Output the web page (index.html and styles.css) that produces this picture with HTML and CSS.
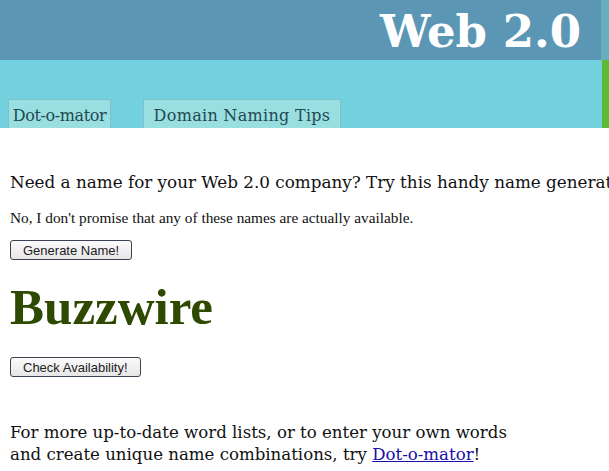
FILE: index.html
```html
<!DOCTYPE html>
<html lang="en">
<head>
    <meta charset="UTF-8">
    <title>Web 2.0 Name Generator</title>
    <link rel="stylesheet" href="styles.css">
</head>
<body>

    <div class="top">
        <div class="top-main">
            <div class="header">
                <h1>Web 2.0</h1>
            </div>
            <div class="nav">
                <a class="tab tab-dot" href="#">Dot-o-mator</a>
                <a class="tab tab-tips" href="#">Domain Naming Tips</a>
            </div>
        </div>
        <div class="side">
            <div class="side-head"></div>
            <div class="side-nav"></div>
        </div>
    </div>

    <div class="content">
        <p class="intro">Need a name for your Web 2.0 company? Try this handy name generator!</p>
        <p class="note">No, I don't promise that any of these names are actually available.</p>
        <button class="btn">Generate Name!</button>
        <div class="name" id="name">Buzzwire</div>
        <button class="btn">Check Availability!</button>
        <p class="more">For more up-to-date word lists, or to enter your own words<br>
            and create unique name combinations, try <a href="#">Dot-o-mator</a>!</p>
    </div>

</body>
</html>
```

FILE: styles.css
```css
body {
    margin: 0;
    font-family: "DejaVu Serif", Georgia, serif;
    background: white;
    overflow: hidden;
}

.top {
    display: flex;
}

.top-main {
    flex: 1;
}

.header {
    background: #5b97b5;
    height: 60px;
    text-align: right;
}

.header h1 {
    margin: 0;
    padding-right: 20px;
    color: white;
    font-size: 45px;
    line-height: 64px;
    font-weight: bold;
}

.nav {
    background: #72d0df;
    height: 68px;
    display: flex;
    align-items: flex-end;
    gap: 32px;
    padding-left: 8px;
}

.tab {
    background: #99dfe2;
    border: 1px solid #7fbfc8;
    border-bottom: none;
    height: 28px;
    color: #24494f;
    font-size: 16px;
    line-height: 32px;
    text-align: center;
    text-decoration: none;
    white-space: nowrap;
}

.tab-dot {
    width: 101px;
    letter-spacing: -0.4px;
}

.tab-tips {
    width: 196px;
    letter-spacing: 0.3px;
}

.side {
    width: 8px;
}

.side-head {
    height: 60px;
    background: #67aec0;
}

.side-nav {
    height: 68px;
    background: #5cba36;
    border-left: 1px solid #72d0df;
}

.content {
    padding-left: 10px;
    white-space: nowrap;
    overflow: hidden;
}

.intro {
    font-size: 16.8px;
    margin: 44px 0 0;
    color: #111;
}

.note {
    font-family: "Liberation Serif", serif;
    font-size: 15.3px;
    margin: 17px 0 0;
    color: #111;
}

.btn {
    font-family: "Liberation Sans", Arial, sans-serif;
    font-size: 13px;
    color: #222;
    background: linear-gradient(#fbfbfb, #e6e6e6);
    border: 1px solid #3a4450;
    border-radius: 3px;
    height: 20px;
    padding: 0 12px;
    display: block;
}

.note + .btn {
    margin-top: 13px;
}

.name {
    font-family: "Liberation Serif", serif;
    font-weight: bold;
    font-size: 51px;
    color: #2d4a00;
    line-height: 56px;
    margin: 19px 0 22px;
}

.more {
    font-size: 16.6px;
    line-height: 22px;
    margin: 45px 0 0;
    color: #111;
}

.more a {
    color: #1a0dab;
}
```
